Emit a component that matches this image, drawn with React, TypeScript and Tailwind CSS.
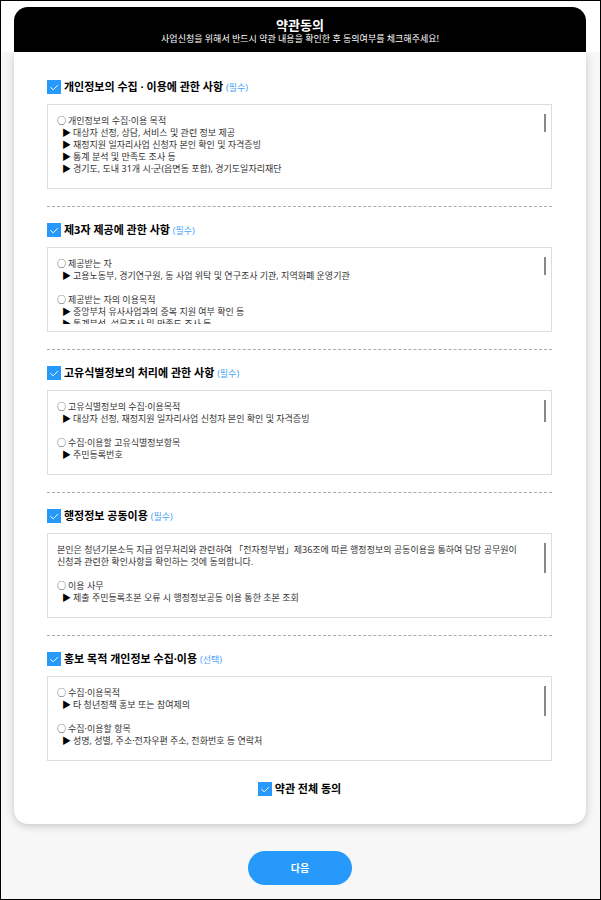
import React, { useState } from "react";

interface Term {
  id: string;
  title: string;
  tag: string;
  thumb: string;
  lines: string[];
}

const terms: Term[] = [
  {
    id: "collect",
    title: "개인정보의 수집 · 이용에 관한 사항",
    tag: "(필수)",
    thumb: "h-[18px]",
    lines: [
      "○ 개인정보의 수집·이용 목적",
      "▶ 대상자 선정, 상담, 서비스 및 관련 정보 제공",
      "▶ 재정지원 일자리사업 신청자 본인 확인 및 자격증빙",
      "▶ 통계 분석 및 만족도 조사 등",
      "▶ 경기도, 도내 31개 시·군(읍면동 포함), 경기도일자리재단",
    ],
  },
  {
    id: "thirdParty",
    title: "제3자 제공에 관한 사항",
    tag: "(필수)",
    thumb: "h-[18px]",
    lines: [
      "○ 제공받는 자",
      "▶ 고용노동부, 경기연구원, 동 사업 위탁 및 연구조사 기관, 지역화폐 운영기관",
      "",
      "○ 제공받는 자의 이용목적",
      "▶ 중앙부처 유사사업과의 중복 지원 여부 확인 등",
      "▶ 통계분석, 설문조사 및 만족도 조사 등",
    ],
  },
  {
    id: "unique",
    title: "고유식별정보의 처리에 관한 사항",
    tag: "(필수)",
    thumb: "h-[22px]",
    lines: [
      "○ 고유식별정보의 수집·이용목적",
      "▶ 대상자 선정, 재정지원 일자리사업 신청자 본인 확인 및 자격증빙",
      "",
      "○ 수집·이용할 고유식별정보항목",
      "▶ 주민등록번호",
    ],
  },
  {
    id: "admin",
    title: "행정정보 공동이용",
    tag: "(필수)",
    thumb: "h-[30px]",
    lines: [
      "본인은 청년기본소득 지급 업무처리와 관련하여 「전자정부법」제36조에 따른 행정정보의 공동이용을 통하여 담당 공무원이 신청과 관련한 확인사항을 확인하는 것에 동의합니다.",
      "",
      "○ 이용 사무",
      "▶ 제출 주민등록초본 오류 시 행정정보공동 이용 통한 초본 조회",
    ],
  },
  {
    id: "promo",
    title: "홍보 목적 개인정보 수집·이용",
    tag: "(선택)",
    thumb: "h-[30px]",
    lines: [
      "○ 수집·이용목적",
      "▶ 타 청년정책 홍보 또는 참여제의",
      "",
      "○ 수집·이용할 항목",
      "▶ 성명, 성별, 주소·전자우편 주소, 전화번호 등 연락처",
    ],
  },
];

interface CheckProps {
  id: string;
  checked: boolean;
  onChange: (checked: boolean) => void;
}

const CheckBox: React.FC<CheckProps> = ({ id, checked, onChange }) => (
  <span className="grid size-3.5 shrink-0">
    <input
      id={id}
      type="checkbox"
      checked={checked}
      onChange={(e) => onChange(e.target.checked)}
      className="col-start-1 row-start-1 size-3.5 appearance-none border border-[#2699fb] bg-white checked:bg-[#2699fb]"
    />
    <svg viewBox="0 0 14 14" className="pointer-events-none col-start-1 row-start-1 size-3.5" fill="none" stroke="#fff" strokeWidth="1">
      <path d="M3.4 7.2 6.2 9.8 10.8 5.2" />
    </svg>
  </span>
);

const lineClass = (line: string) => {
  if (line === "") return "h-3";
  return line.startsWith("▶") ? "pl-[5px]" : "";
};

// "○" and "▶" sit in front of the text as list marks
const TermLine: React.FC<{ line: string }> = ({ line }) => {
  const mark = line.charAt(0);
  if (mark !== "○" && mark !== "▶") return <p className={lineClass(line)}>{line}</p>;
  return (
    <p className={`flex ${lineClass(line)}`}>
      <span className={`w-[11px] shrink-0 ${mark === "▶" ? "text-black" : ""}`}>{mark}</span>
      <span>{line.slice(2)}</span>
    </p>
  );
};

const App: React.FC = () => {
  const [agreed, setAgreed] = useState<Record<string, boolean>>({
    collect: true,
    thirdParty: true,
    unique: true,
    admin: true,
    promo: true,
  });

  const allAgreed = terms.every((term) => agreed[term.id]);

  const handleAll = (checked: boolean) => {
    setAgreed(Object.fromEntries(terms.map((term) => [term.id, checked])));
  };

  return (
    <div className="min-h-screen border border-black bg-[#f7f7f7] font-['Noto_Sans','Noto_Sans_CJK_KR',sans-serif] text-[#333]">
      {/* Header */}
      <div className="relative z-10 bg-white pt-1.5 pr-3.5 pl-[13px]">
        <header className="rounded-t-[14px] bg-black pt-2.5 pb-[7px] text-center text-white">
          <h1 className="text-[13px] leading-4 font-bold">약관동의</h1>
          <p className="text-[9px] leading-3">사업신청을 위해서 반드시 약관 내용을 확인한 후 동의여부를 체크해주세요!</p>
        </header>
      </div>

      {/* Terms */}
      <form onSubmit={(e) => e.preventDefault()} className="pr-3.5 pb-3.5 pl-[13px]">
        <div className="rounded-b-[14px] bg-white pt-[25px] pr-[34px] pb-[25px] pl-[33px] shadow-[0_2px_8px_rgba(0,0,0,0.2)]">
          {terms.map((term) => (
            <section key={term.id} className="mb-[13px] border-b border-dashed border-[#aaa] pb-[17px] last-of-type:mb-0 last-of-type:border-0 last-of-type:pb-[18px]">
              <div className="mb-[7px] flex h-5 items-center">
                <CheckBox id={term.id} checked={agreed[term.id]} onChange={(checked) => setAgreed({ ...agreed, [term.id]: checked })} />
                <label htmlFor={term.id} className="ml-[3px] text-[11px] leading-5 font-bold text-black">
                  {term.title} <span className="text-[9px] font-normal text-[#4aa3f8]">{term.tag}</span>
                </label>
              </div>
              <div className="flex h-[85px] items-start border border-[#ddd] px-[5px] pt-[9px]">
                <div className="h-[67px] flex-1 overflow-hidden pt-px pr-6 pl-1 text-[9px] leading-3">
                  {term.lines.map((line, i) => (
                    <TermLine key={i} line={line} />
                  ))}
                </div>
                <div className={`w-0.5 bg-[#888] ${term.thumb}`} />
              </div>
            </section>
          ))}

          {/* Agree to all */}
          <div className="flex h-5 items-center justify-center">
            <CheckBox id="all" checked={allAgreed} onChange={handleAll} />
            <label htmlFor="all" className="ml-[3px] text-[11px] leading-5 font-bold text-black">약관 전체 동의</label>
          </div>
        </div>

        <div className="mt-[27px] flex justify-center">
          <button type="submit" className="h-[34px] w-[104px] rounded-full bg-[#2699fb] text-[10px] font-bold text-white">
            다음
          </button>
        </div>
      </form>
    </div>
  );
};

export default App;
